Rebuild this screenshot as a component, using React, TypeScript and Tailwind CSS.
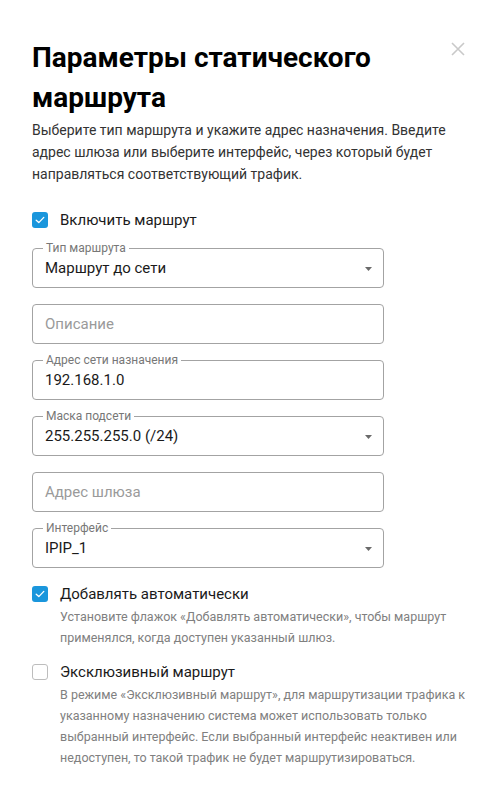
import React from "react";

function Check({ checked }: { checked: boolean }) {
  return checked ? (
    <span className="flex h-4 w-4 shrink-0 items-center justify-center rounded-[3px] bg-[#1a96dc]">
      <svg width="10" height="8" viewBox="0 0 10 8" fill="none">
        <path d="M1.2 4.2 3.8 6.6 8.8 1.4" stroke="#fff" strokeWidth="1.3" strokeLinecap="round" strokeLinejoin="round" />
      </svg>
    </span>
  ) : (
    <span className="block h-4 w-4 shrink-0 rounded-[3px] border border-[#bdbdbd] bg-white" />
  );
}

function Field({
  label,
  value,
  placeholder,
  select,
}: {
  label?: string;
  value?: string;
  placeholder?: string;
  select?: boolean;
}) {
  return (
    <div className="relative flex h-10 w-[352px] items-center rounded-[4px] border border-[#a3a3a3] pl-3 pr-[11px]">
      {label && (
        <span className="absolute left-[10px] top-[-8px] bg-white px-[3px] text-[12px] leading-[14px] text-[#777]">
          {label}
        </span>
      )}
      <span className={"flex-1 text-[15px] " + (value ? "text-[#1a1a1a]" : "text-[#9a9a9a]")}>
        {value ?? placeholder}
      </span>
      {select && (
        <svg width="7" height="4" viewBox="0 0 7 4" className="mt-[1px]">
          <path d="M0 0h7L3.5 4z" fill="#6a6a6a" />
        </svg>
      )}
    </div>
  );
}

function Option({
  checked,
  label,
  help,
}: {
  checked: boolean;
  label: string;
  help: string;
}) {
  return (
    <div className="flex gap-3">
      <div className="pt-[4px]">
        <Check checked={checked} />
      </div>
      <div className="flex flex-col">
        <span className="text-[15px] leading-6 text-[#1a1a1a]">{label}</span>
        <span className="text-[12.5px] leading-[21px] text-[#808080]">{help}</span>
      </div>
    </div>
  );
}

export default function App() {
  return (
    <div className="relative min-h-[790px] w-[500px] bg-white px-8 pt-[38px] font-['Roboto',sans-serif]">
      <button className="absolute right-[35px] top-[42px] text-[#c9c9c9]">
        <svg width="14" height="14" viewBox="0 0 14 14">
          <path d="M1 1 13 13M13 1 1 13" stroke="currentColor" strokeWidth="1.6" />
        </svg>
      </button>
      <h1 className="text-[28px] font-bold leading-10 text-black">
        Параметры статического
        <br />
        маршрута
      </h1>
      <p className="mt-[1px] text-[14px] leading-[22px] text-[#333]">
        Выберите тип маршрута и укажите адрес назначения. Введите адрес шлюза или выберите интерфейс, через который будет направляться соответствующий трафик.
      </p>
      <label className="mt-[23px] flex items-center gap-3">
        <Check checked />
        <span className="text-[15px] leading-6 text-[#1a1a1a]">Включить маршрут</span>
      </label>
      <div className="mt-4 flex flex-col gap-4">
        <Field label="Тип маршрута" value="Маршрут до сети" select />
        <Field placeholder="Описание" />
        <Field label="Адрес сети назначения" value="192.168.1.0" />
        <Field label="Маска подсети" value="255.255.255.0 (/24)" select />
        <Field placeholder="Адрес шлюза" />
        <Field label="Интерфейс" value="IPIP_1" select />
      </div>
      <div className="mt-[14px] flex flex-col gap-3">
        <Option
          checked
          label="Добавлять автоматически"
          help="Установите флажок «Добавлять автоматически», чтобы маршрут применялся, когда доступен указанный шлюз."
        />
        <Option
          checked={false}
          label="Эксклюзивный маршрут"
          help="В режиме «Эксклюзивный маршрут», для маршрутизации трафика к указанному назначению система может использовать только выбранный интерфейс. Если выбранный интерфейс неактивен или недоступен, то такой трафик не будет маршрутизироваться."
        />
      </div>
    </div>
  );
}
